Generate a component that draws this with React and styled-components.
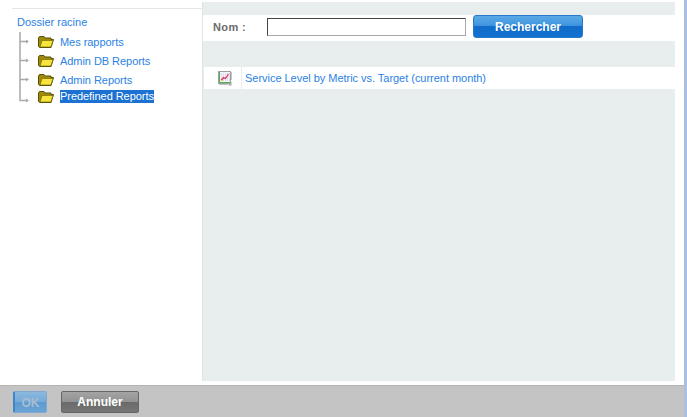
import React from 'react'
import styled, { createGlobalStyle } from 'styled-components'

const Global = createGlobalStyle`
  html, body { margin: 0; padding: 0; background: #fff; }
  body { font-family: "Liberation Sans", Arial, sans-serif; }
`

const Page = styled.div`
  width: 687px;
  height: 417px;
  overflow: hidden;
  display: flex;
`

const Dialog = styled.div`
  width: 684px;
  display: flex;
  flex-direction: column;
`

const EdgeStrip = styled.div`
  width: 3px;
  background: #a9c0e4;
`

const Body = styled.div`
  height: 385px;
  display: flex;
  background: #fff;
`

const TreePanel = styled.div`
  width: 202px;
  padding: 8px 0 0 12px;
  box-sizing: border-box;
`

const TreeRule = styled.div`
  height: 1px;
  background: #e4e6e6;
`

const RootLabel = styled.div`
  margin: 6px 0 0 5px;
  font-size: 11px;
  line-height: 14px;
  color: #2a82e4;
`

const TreeList = styled.ul`
  list-style: none;
  margin: 3px 0 0 7px;
  padding: 0;
`

const TreeRow = styled.li`
  height: ${p => p.$height}px;
  display: flex;
  align-items: center;
`

const FolderSlot = styled.span`
  display: flex;
  margin: 0 6px 0 8px;
`

const NodeLabel = styled.span`
  font-size: 11px;
  line-height: 13px;
  letter-spacing: -0.05px;
  padding-top: ${p => (p.$selected ? '0' : '2px')};
  color: ${p => (p.$selected ? '#fff' : '#2a82e4')};
  background: ${p => (p.$selected ? '#1b72d2' : 'transparent')};
`

const Content = styled.div`
  width: 472px;
  margin: 2px 0 4px;
  padding-top: 13px;
  background: #e8eded;
  border-left: 1px solid #dfe4e4;
`

const SearchBar = styled.div`
  height: 26px;
  display: flex;
  align-items: center;
  background: #fff;
  padding-left: 10px;
`

const SearchLabel = styled.label`
  width: 54px;
  padding-bottom: 2px;
  font-size: 11px;
  font-weight: 700;
  letter-spacing: 0.4px;
  color: #6b6b6b;
`

const SearchInput = styled.input`
  width: 199px;
  height: 18px;
  margin-bottom: 2px;
  box-sizing: border-box;
  padding: 0;
  background: #fff;
  border: 1px solid #a8a8a8;
  border-top-color: #444;
  border-left-color: #444;
  outline: none;
`

const SearchButton = styled.button`
  width: 110px;
  height: 23px;
  margin: 0 0 3px 7px;
  padding: 0;
  border: 1px solid #2a78c8;
  border-radius: 3px;
  background: linear-gradient(#5aa9e6 0%, #3f95de 45%, #0f6cc8 50%, #1272cf 100%);
  color: #fff;
  font-family: inherit;
  font-size: 12px;
  font-weight: 700;
`

const ResultRow = styled.div`
  height: 22px;
  margin: 26px 0 0 1px;
  display: flex;
  align-items: stretch;
  background: #fff;
`

const IconCell = styled.div`
  width: 32px;
  padding-left: 5px;
  display: flex;
  align-items: center;
  justify-content: center;
  border-right: 1px solid #e8eded;
`

const ResultLink = styled.a`
  padding: 1px 0 0 3px;
  font-size: 11px;
  line-height: 21px;
  letter-spacing: -0.03px;
  color: #2a82e4;
`

const Footer = styled.div`
  height: 32px;
  display: flex;
  gap: 14px;
  padding: 5px 0 0 13px;
  box-sizing: border-box;
  background: #c4c4c4;
  border-top: 1px solid #b4b4b4;
`

const OkButton = styled.button`
  width: 34px;
  height: 22px;
  padding: 2px 0 0;
  border: 1px solid #7fa9d0;
  border-left: 2px solid #3f86c8;
  border-radius: 2px;
  background: linear-gradient(#8bb8de 0%, #76abd9 48%, #5d9ad0 52%, #6ba4d6 100%);
  color: #a6bdd2;
  font-family: inherit;
  font-size: 12px;
  font-weight: 700;
`

const CancelButton = styled.button`
  width: 78px;
  height: 22px;
  padding: 0;
  border: 1px solid #666;
  border-radius: 2px;
  background: linear-gradient(#a4a4a4 0%, #929292 48%, #6a6a6a 52%, #767676 100%);
  color: #fff;
  font-family: inherit;
  font-size: 12px;
  font-weight: 700;
`

const ConnectorSvg = styled.svg`
  align-self: ${p => (p.$last ? 'flex-start' : 'center')};
`

function Connector({ last }) {
  return (
    <ConnectorSvg $last={last} width="11" height="19" viewBox="0 0 11 19">
      <path d={last ? 'M1 0V11.5H7' : 'M1 0V19M1 9.5H7'} stroke="#a8a8a8" strokeWidth="1.5" fill="none" />
      <path d={last ? 'M7 9.5L10 11.5L7 13.5Z' : 'M7 7.5L10 9.5L7 11.5Z'} fill="#a8a8a8" />
    </ConnectorSvg>
  )
}

function Folder() {
  return (
    <svg width="16" height="12" viewBox="0 0 16 12">
      <path d="M0.5 10.5V2L1.5 0.5H6L7 2H13V3.5H15.5L13 11.5H1.5Z" fill="#a08a08" stroke="#5a5008" />
      <path d="M2 11L4 4.5H15L12.8 11Z" fill="#f6e63c" stroke="#6a5e08" strokeWidth="0.6" />
    </svg>
  )
}

function ChartIcon() {
  return (
    <svg width="14" height="15" viewBox="0 0 14 15">
      <rect x="0.5" y="0.5" width="12" height="12" fill="#f4f2fb" stroke="#a0a0a0" />
      <path d="M3 3H12M3 5H12M3 7H12M3 9H12" stroke="#c8c4e8" strokeDasharray="1 1" />
      <path d="M1.5 1V11.5H13" stroke="#4cb050" fill="none" />
      <path d="M3 9.5L5.5 6.5L7.5 7.5L10.5 3" stroke="#e0304a" fill="none" strokeWidth="1.2" />
      <path d="M1 13.5H10M13.5 1V9" stroke="#c4c4c4" />
      <path d="M10 14.5L13.5 10.5V14.5Z" fill="#a8a8a8" />
      <rect x="3" y="9" width="2" height="1" fill="#e8d040" />
    </svg>
  )
}

const folders = [
  { name: 'Mes rapports', height: 19 },
  { name: 'Admin DB Reports', height: 19 },
  { name: 'Admin Reports', height: 19 },
  { name: 'Predefined Reports', height: 15, selected: true, last: true },
]

export default function App() {
  return (
    <Page>
      <Global />
      <Dialog>
        <Body>
          <TreePanel>
            <TreeRule />
            <RootLabel>Dossier racine</RootLabel>
            <TreeList>
              {folders.map(f => (
                <TreeRow key={f.name} $height={f.height}>
                  <Connector last={f.last} />
                  <FolderSlot><Folder /></FolderSlot>
                  <NodeLabel $selected={f.selected}>{f.name}</NodeLabel>
                </TreeRow>
              ))}
            </TreeList>
          </TreePanel>
          <Content>
            <SearchBar>
              <SearchLabel>Nom :</SearchLabel>
              <SearchInput />
              <SearchButton>Rechercher</SearchButton>
            </SearchBar>
            <ResultRow>
              <IconCell><ChartIcon /></IconCell>
              <ResultLink>Service Level by Metric vs. Target (current month)</ResultLink>
            </ResultRow>
          </Content>
        </Body>
        <Footer>
          <OkButton>OK</OkButton>
          <CancelButton>Annuler</CancelButton>
        </Footer>
      </Dialog>
      <EdgeStrip />
    </Page>
  )
}
